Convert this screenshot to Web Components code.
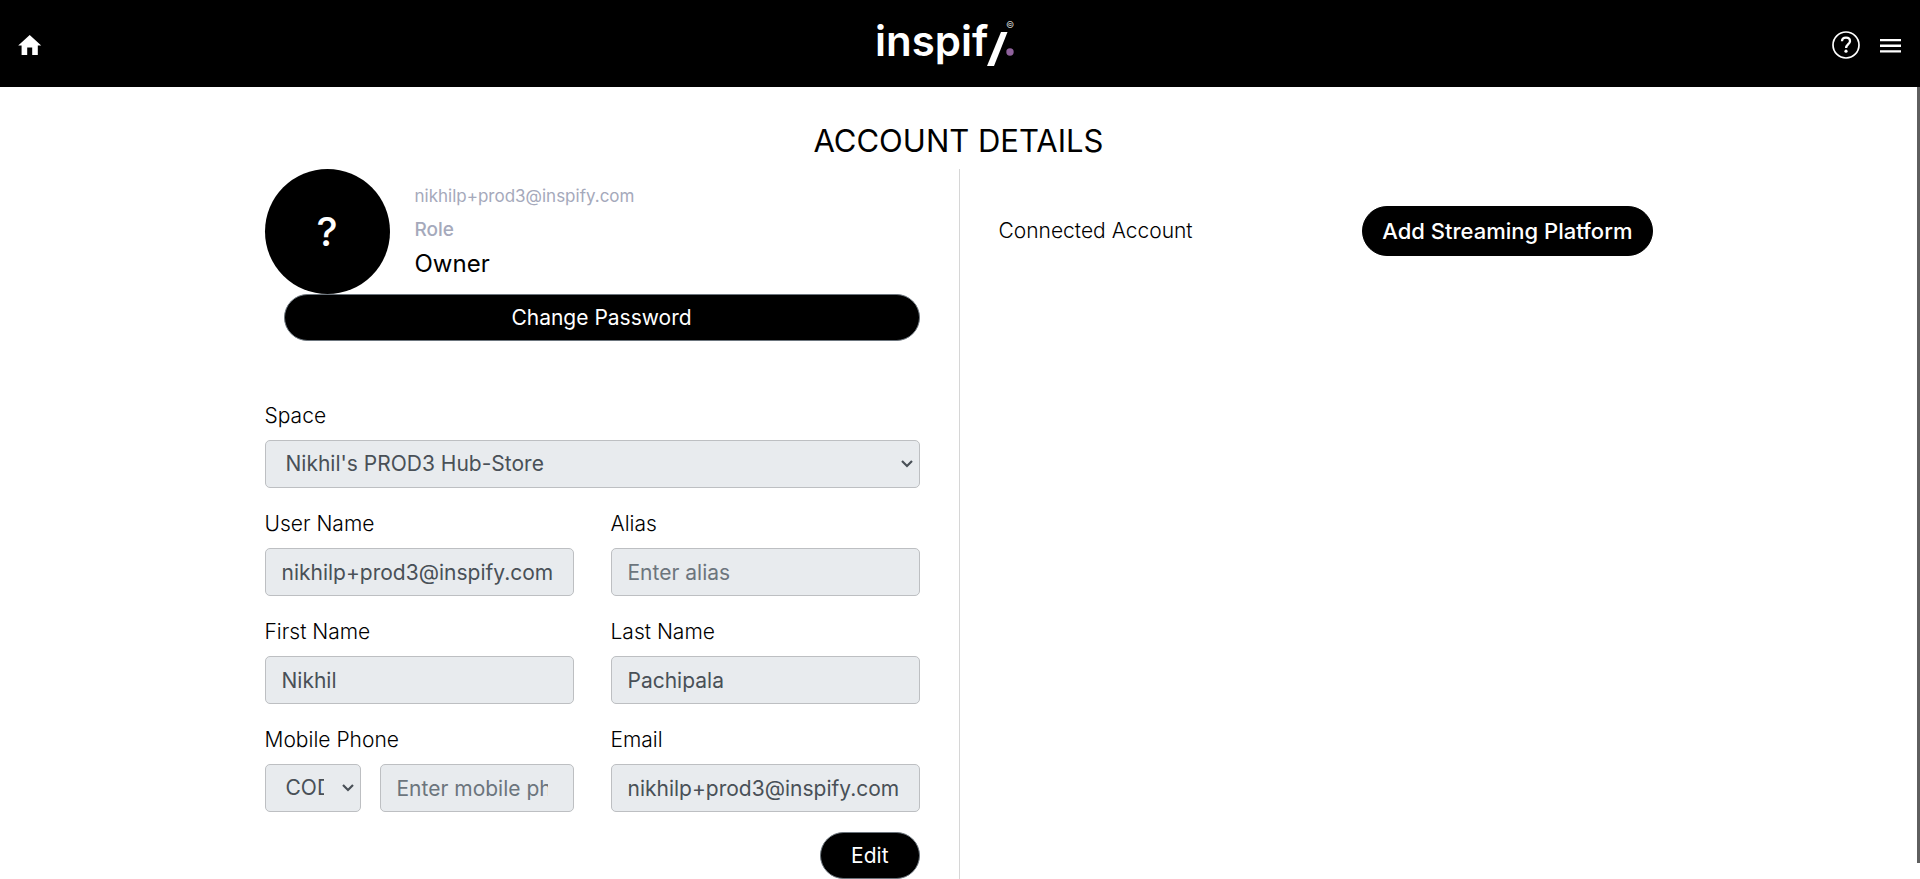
<!DOCTYPE html>
<html lang="en">
<head>
<meta charset="utf-8">
<meta name="viewport" content="width=device-width, initial-scale=1">
<title>Account Details</title>
<style>
  html, body { margin: 0; height: 100%; }
  body { font-family: Inter, "Open Sans", sans-serif; font-size: 21px; line-height: 32px; color: #000; background: #fff; }
</style>
</head>
<body>
<app-shell>
  <app-header slot="header"></app-header>
  <account-page>
    <profile-card slot="main" email="nikhilp+prod3@inspify.com" role-name="Owner"></profile-card>
    <account-form slot="main"></account-form>
    <connected-account slot="side"></connected-account>
  </account-page>
</app-shell>

<script>
const define = (name, html, setup) => customElements.define(name, class extends HTMLElement {
  constructor() {
    super();
    this.attachShadow({ mode: 'open' }).innerHTML = html;
  }
  connectedCallback() {
    if (setup) setup(this, this.shadowRoot);
  }
});

define('app-shell', `
  <style>
    :host { display: flex; flex-direction: column; height: 100vh; }
    .body { flex: 1; min-height: 0; display: flex; }
    main { flex: 1; min-width: 0; overflow: hidden auto; scrollbar-width: none; }
    .track { width: 3px; }
    .thumb { height: 98%; background: #5f5f5f; }
  </style>
  <slot name="header"></slot>
  <div class="body">
    <main><slot></slot></main>
    <div class="track" aria-hidden="true"><div class="thumb"></div></div>
  </div>`);

define('app-header', `
  <style>
    :host { display: block; flex: none; background: #000; color: #fff; }
    header { display: grid; grid-template-columns: 1fr auto 1fr; align-items: center; height: 87px; padding: 0 16px; box-sizing: border-box; }
    nav { display: flex; align-items: center; gap: 16px; padding-top: 2px; }
    nav.end { justify-content: flex-end; }
    a, button { display: block; padding: 0; border: 0; background: none; color: inherit; cursor: pointer; }
    svg { display: block; }
    .logo text { font-family: Inter, sans-serif; }
  </style>
  <header>
    <nav aria-label="Home">
      <a href="#home" aria-label="Home">
        <svg width="28" height="28" viewBox="0 0 28 28" fill="#fff"><path d="M13.7 4 25.2 14.4H21.8V24H16.2V16.6H11.2V24H5.6V14.4H2.2Z"/></svg>
      </a>
    </nav>
    <a href="#home" aria-label="inspify">
      <svg class="logo" width="174" height="60" viewBox="0 0 174 60">
        <text x="2" y="42" font-size="42" font-weight="600" fill="#fff">inspif</text>
        <path d="M128 18H134.500L121 52H114Z" fill="#fff"/>
        <circle cx="137" cy="38" r="3.700" fill="#8f629c"/>
        <text x="133" y="14" font-size="9" fill="#ccc">©</text>
      </svg>
    </a>
    <nav class="end" aria-label="Tools">
      <button type="button" aria-label="Help">
        <svg width="30" height="30" viewBox="0 0 30 30" fill="none" stroke="#fff"><circle cx="15" cy="15" r="13" stroke-width="1.700"/><path d="M11 11.300C11 9 12.700 7.700 15 7.700S19 9.100 19 11.200C19 14 15.200 14.400 15.100 18" stroke-width="2.300"/><circle cx="15" cy="21.200" r="1.600" fill="#fff" stroke="none"/></svg>
      </button>
      <button type="button" aria-label="Menu">
        <svg width="27" height="30" viewBox="0 0 27 30" fill="#fff"><path d="M3 9H24V11.300H3ZM3 14.600H24V16.900H3ZM3 20.200H24V22.500H3Z"/></svg>
      </button>
    </nav>
  </header>`);

define('account-page', `
  <style>
    :host { display: block; max-width: 1466px; margin: 0 auto; padding-top: 34px; }
    h1 { margin: 0; font-size: 31px; line-height: 40px; font-weight: 400; text-align: center; padding-bottom: 8px; }
    .columns { display: grid; grid-template-columns: 1fr 1fr; min-height: 728px; }
    .main { padding: 0 39px; }
    .side { padding: 37px 39px 0 39px; border-left: 1px solid #d6d6d6; }
  </style>
  <h1>ACCOUNT DETAILS</h1>
  <div class="columns">
    <section class="main"><slot name="main"></slot></section>
    <section class="side"><slot name="side"></slot></section>
  </div>`);

define('pill-button', `
  <style>
    :host { display: block; }
    button { display: block; box-sizing: border-box; width: 100%; height: 47px; padding: 0 30px; border: 1px solid #6c757d; border-radius: 25px; background: #000; color: #fff; font: inherit; font-weight: 400; cursor: pointer; }
    :host([large]) button { height: 50px; padding: 0 19px; border-color: #000; font-size: 22px; font-weight: 500; }
  </style>
  <button type="button"><slot></slot></button>`);

define('profile-card', `
  <style>
    :host { display: block; }
    .who { display: flex; align-items: center; gap: 25px; }
    .avatar { flex: none; display: grid; place-items: center; width: 125px; height: 125px; border-radius: 50%; background: #000; color: #fff; font-size: 40px; font-weight: 500; }
    .info { padding-bottom: 4px; }
    p { margin: 0; line-height: 34px; }
    .email { font-size: 17px; color: #a5a9bb; }
    .label { font-size: 19px; font-weight: 500; color: #a5a9bb; }
    .role { font-size: 24px; }
    pill-button { margin-left: 19px; }
  </style>
  <div class="who">
    <div class="avatar">?</div>
    <div class="info">
      <p class="email"></p>
      <p class="label">Role</p>
      <p class="role"></p>
    </div>
  </div>
  <pill-button>Change Password</pill-button>`, (host, root) => {
  root.querySelector('.email').textContent = host.getAttribute('email');
  root.querySelector('.role').textContent = host.getAttribute('role-name');
});

define('account-form', `
  <style>
    :host { display: block; padding-top: 59px; }
    form { display: grid; grid-template-columns: 1fr 1fr; column-gap: 37px; row-gap: 20px; }
    .wide { grid-column: 1 / -1; }
    label { display: block; padding-bottom: 8px; font-weight: 300; }
    input, select { display: block; box-sizing: border-box; width: 100%; height: 48px; border: 1px solid #bdbfc2; border-radius: 5px; background-color: #e8ebee; color: #495057; font: inherit; opacity: 1; }
    input { padding: 0 16px; }
    input[type="tel"] { padding-right: 25px; }
    select { appearance: none; padding: 0 36px 0 20px; background-repeat: no-repeat; background-position: right 5px center;
      background-image: url("data:image/svg+xml,%3Csvg xmlns='http://www.w3.org/2000/svg' width='14' height='10'%3E%3Cpath d='M2 2l5 5 5-5' fill='none' stroke='%23495057' stroke-width='2.2'/%3E%3C/svg%3E"); }
    input::placeholder { color: #6c757d; opacity: 1; }
    .phone { display: grid; grid-template-columns: 96px 1fr; gap: 19px; }
    .actions { grid-column: 1 / -1; display: flex; justify-content: flex-end; }
  </style>
  <form>
    <div class="wide">
      <label for="space">Space</label>
      <select id="space" disabled><option>Nikhil's PROD3 Hub-Store</option></select>
    </div>
    <div><label for="user">User Name</label><input id="user" value="nikhilp+prod3@inspify.com" disabled></div>
    <div><label for="alias">Alias</label><input id="alias" placeholder="Enter alias" disabled></div>
    <div><label for="first">First Name</label><input id="first" value="Nikhil" disabled></div>
    <div><label for="last">Last Name</label><input id="last" value="Pachipala" disabled></div>
    <div>
      <label for="phone">Mobile Phone</label>
      <div class="phone">
        <select aria-label="Country code" disabled><option>CODE</option></select>
        <input id="phone" type="tel" placeholder="Enter mobile phone" disabled>
      </div>
    </div>
    <div><label for="email">Email</label><input id="email" type="email" value="nikhilp+prod3@inspify.com" disabled></div>
    <div class="actions"><pill-button>Edit</pill-button></div>
  </form>`);

define('connected-account', `
  <style>
    :host { display: flex; align-items: center; justify-content: space-between; font-weight: 300; }
  </style>
  <span>Connected Account</span>
  <pill-button large>Add Streaming Platform</pill-button>`);
</script>
</body>
</html>
